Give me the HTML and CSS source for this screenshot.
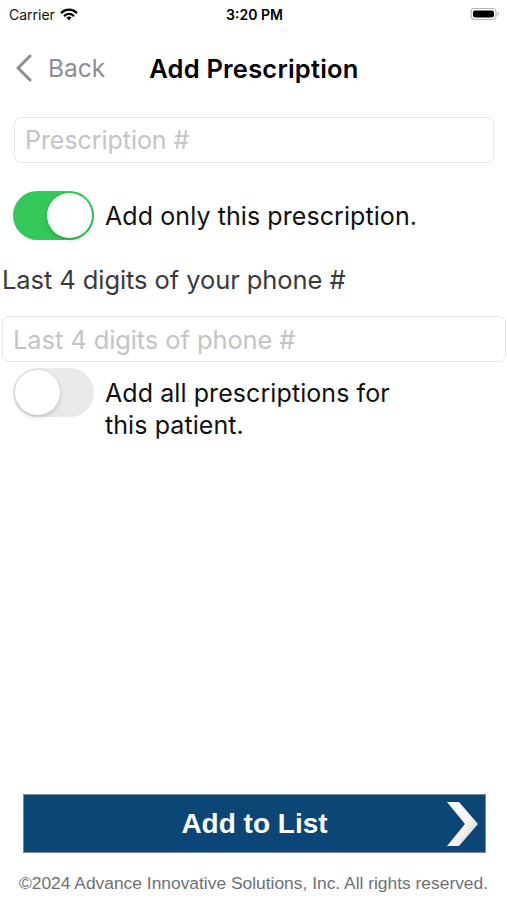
FILE: index.html
```
<!DOCTYPE html>
<html>
<head>
<meta charset="utf-8">
<link rel="stylesheet" href="styles.css">
</head>
<body>
<div class="screen">
  <div class="statusbar">
    <div class="sb-left">
      <span class="carrier">Carrier</span>
      <svg class="wifi" width="18" height="13" viewBox="0 0 18 13">
        <path d="M9 12.5 L6.4 9.6 A3.8 3.8 0 0 1 11.6 9.6 Z" fill="#000"/>
        <path d="M4.6 7.6 A6.4 6.4 0 0 1 13.4 7.6" stroke="#000" stroke-width="2.2" fill="none" stroke-linecap="round"/>
        <path d="M1.6 4.6 A10.6 10.6 0 0 1 16.4 4.6" stroke="#000" stroke-width="2.2" fill="none" stroke-linecap="round"/>
      </svg>
    </div>
    <div class="time">3:20 PM</div>
    <div class="sb-right">
      <svg width="30" height="14" viewBox="0 0 30 14">
        <rect x="1" y="1.5" width="25" height="11" rx="3.5" fill="none" stroke="#b5b5b5" stroke-width="1.2"/>
        <rect x="3" y="3.5" width="21" height="7" rx="2" fill="#000"/>
        <path d="M27.6 5 Q29 5.5 29 7 Q29 8.5 27.6 9 Z" fill="#b5b5b5"/>
      </svg>
    </div>
  </div>

  <div class="navbar">
    <div class="back">
      <svg width="20" height="28" viewBox="0 0 20 28">
        <path d="M16 2 L4 14 L16 26" stroke="#8e8e93" stroke-width="3" fill="none" stroke-linecap="round" stroke-linejoin="round"/>
      </svg>
      <span>Back</span>
    </div>
    <div class="title">Add Prescription</div>
  </div>

  <div class="field field-rx">Prescription #</div>

  <div class="toggle-row">
    <div class="switch on"><div class="knob"></div></div>
    <div class="toggle-label">Add only this prescription.</div>
  </div>

  <div class="phone-label">Last 4 digits of your phone #</div>

  <div class="field field-phone">Last 4 digits of phone #</div>

  <div class="toggle-row toggle-row2">
    <div class="switch off"><div class="knob"></div></div>
    <div class="toggle-label">Add all prescriptions for<br>this patient.</div>
  </div>

  <div class="spacer"></div>

  <div class="button">
    <span>Add to List</span>
    <svg class="chev" width="36" height="46" viewBox="0 0 36 46">
      <defs>
        <linearGradient id="cg" x1="0" y1="0" x2="1" y2="1">
          <stop offset="0" stop-color="#ffffff"/>
          <stop offset="0.6" stop-color="#f2f2f2"/>
          <stop offset="1" stop-color="#b9bcc0"/>
        </linearGradient>
      </defs>
      <path d="M3 1 L15 1 L34 23 L15 45 L3 45 L21 23 Z" fill="url(#cg)"/>
    </svg>
  </div>

  <div class="footer">©2024 Advance Innovative Solutions, Inc. All rights reserved.</div>
</div>
</body>
</html>
```

FILE: styles.css
```
html, body {
  margin: 0;
  padding: 0;
  background: #ffffff;
}

.screen {
  width: 507px;
  height: 900px;
  display: flex;
  flex-direction: column;
  font-family: Inter, "Liberation Sans", sans-serif;
  color: #000;
}

.statusbar {
  height: 28px;
  display: flex;
  align-items: center;
  justify-content: space-between;
  padding: 0 7px 0 9px;
  font-size: 14px;
}

.sb-left {
  display: flex;
  align-items: center;
  gap: 5px;
  width: 120px;
}

.carrier {
  color: #111;
}

.time {
  font-weight: 600;
  font-size: 14px;
}

.sb-right {
  width: 120px;
  display: flex;
  justify-content: flex-end;
}

.navbar {
  height: 80px;
  display: flex;
  align-items: center;
}

.back {
  display: flex;
  align-items: center;
  gap: 14px;
  margin-left: 14px;
  color: #8e8e93;
  font-size: 24.5px;
}

.title {
  margin-left: 44px;
  font-size: 25.5px;
  font-weight: 600;
  letter-spacing: 0.2px;
}

.field {
  height: 46px;
  box-sizing: border-box;
  border: 1px solid #e6e6e8;
  border-radius: 7px;
  display: flex;
  align-items: center;
  color: #c4c4c7;
  font-size: 25px;
  letter-spacing: -0.05px;
}

.field-rx {
  margin: 9px 13px 0 14px;
  padding-left: 10px;
}

.toggle-row {
  display: flex;
  align-items: center;
  margin-top: 28px;
  margin-left: 13px;
  gap: 11px;
}

.switch {
  width: 81px;
  height: 49px;
  border-radius: 25px;
  box-sizing: border-box;
  position: relative;
  flex: none;
}

.switch.on {
  background: #34c759;
}

.switch.off {
  background: #e9e9eb;
}

.knob {
  position: absolute;
  top: 2px;
  width: 45px;
  height: 45px;
  border-radius: 50%;
  background: #fff;
  box-shadow: 0 2px 4px rgba(0,0,0,0.18);
}

.switch.on .knob {
  right: 2px;
}

.switch.off .knob {
  left: 2px;
}

.toggle-label {
  font-size: 25px;
  line-height: 32px;
  letter-spacing: 0.08px;
  color: #111;
}

.phone-label {
  margin-top: 24px;
  margin-left: 2px;
  font-size: 25.5px;
  letter-spacing: -0.08px;
  color: #3a3a3c;
  height: 32px;
  line-height: 32px;
}

.field-phone {
  margin: 20px 1px 0 2px;
  padding-left: 10px;
  font-size: 25.5px;
  letter-spacing: -0.1px;
}

.toggle-row2 {
  margin-top: 6px;
  align-items: flex-start;
}

.toggle-row2 .toggle-label {
  margin-top: 9px;
}

.spacer {
  flex: 1;
}

.button {
  margin: 0 21px 0 23px;
  height: 59px;
  background: #0c4676;
  border: 1px solid #7d8b99;
  box-sizing: border-box;
  display: flex;
  align-items: center;
  justify-content: center;
  position: relative;
  font-family: "Liberation Sans", Arial, sans-serif;
  font-weight: bold;
  font-size: 28px;
  color: #fff;
}

.chev {
  position: absolute;
  right: 5px;
  top: 6px;
}

.footer {
  height: 47px;
  box-sizing: border-box;
  padding-top: 20px;
  line-height: 20px;
  text-align: center;
  font-family: "Liberation Sans", Arial, sans-serif;
  font-size: 17.4px;
  color: #707074;
}
```
